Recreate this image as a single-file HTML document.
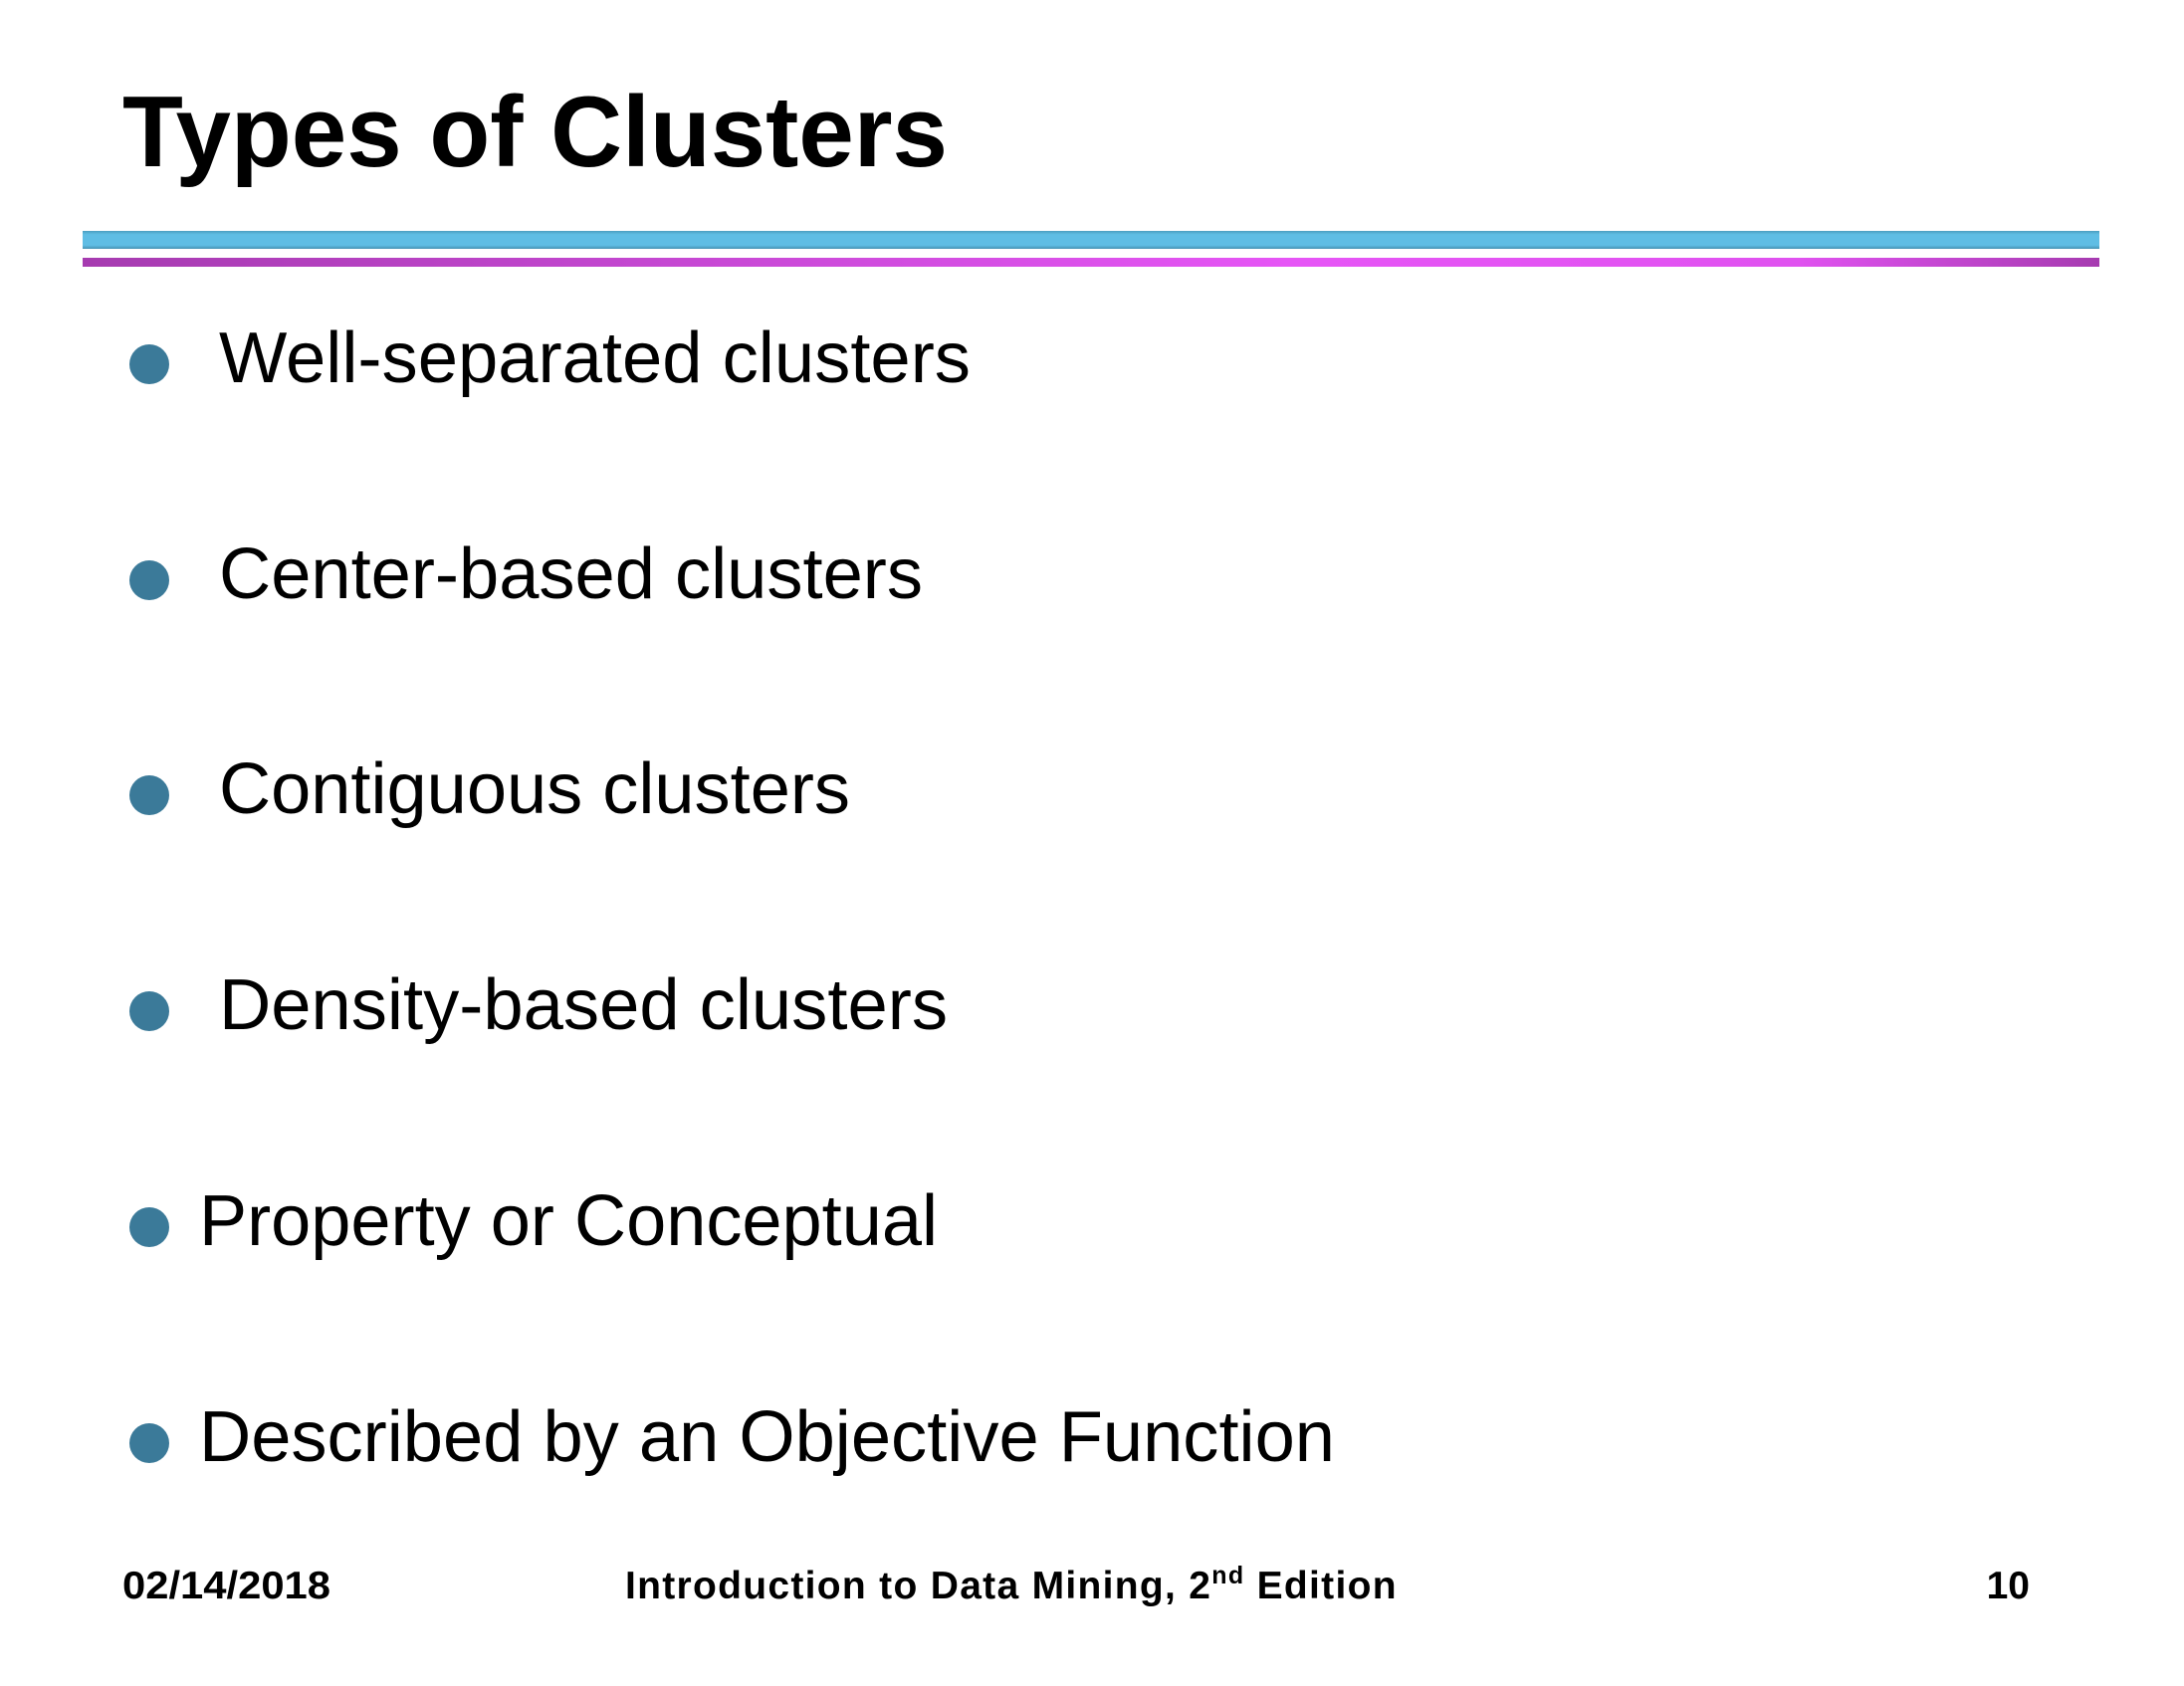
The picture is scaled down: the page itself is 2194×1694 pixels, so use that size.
<!DOCTYPE html>
<html><head><meta charset="utf-8"><style>html,body{margin:0;padding:0;background:#fff}svg{display:block}</style></head>
<body>
<svg width="2194" height="1694" viewBox="0 0 2194 1694" xmlns="http://www.w3.org/2000/svg" font-family="Liberation Sans, Arial, sans-serif">
<defs>
<linearGradient id="b" x1="0" y1="0" x2="0" y2="1"><stop offset="0" stop-color="#4a9ec0"/><stop offset="0.2" stop-color="#5fbde4"/><stop offset="0.8" stop-color="#5fbde4"/><stop offset="1" stop-color="#4592b2"/></linearGradient>
<linearGradient id="p" x1="0" y1="0" x2="1" y2="0"><stop offset="0" stop-color="#a63bb0"/><stop offset="0.6" stop-color="#e655f6"/><stop offset="0.85" stop-color="#e052f0"/><stop offset="1" stop-color="#a63bb0"/></linearGradient>
</defs>
<text x="123" y="167" font-size="101" font-weight="bold" textLength="829" lengthAdjust="spacingAndGlyphs">Types of Clusters</text>
<rect x="83" y="232" width="2026" height="18" fill="url(#b)"/>
<rect x="83" y="259" width="2026" height="9" fill="url(#p)"/>
<g fill="#3b7a99">
<circle cx="150" cy="366" r="20"/><circle cx="150" cy="583" r="20"/><circle cx="150" cy="799" r="20"/><circle cx="150" cy="1016" r="20"/><circle cx="150" cy="1233" r="20"/><circle cx="150" cy="1450" r="20"/>
</g>
<g font-size="72" fill="#000">
<text x="220" y="384" textLength="755" lengthAdjust="spacingAndGlyphs">Well-separated clusters</text>
<text x="220" y="601" textLength="707" lengthAdjust="spacingAndGlyphs">Center-based clusters</text>
<text x="220" y="817" textLength="634" lengthAdjust="spacingAndGlyphs">Contiguous clusters</text>
<text x="220" y="1034" textLength="732" lengthAdjust="spacingAndGlyphs">Density-based clusters</text>
<text x="200" y="1251" textLength="742" lengthAdjust="spacingAndGlyphs">Property or Conceptual</text>
<text x="200" y="1468" textLength="1141" lengthAdjust="spacingAndGlyphs">Described by an Objective Function</text>
</g>
<g font-size="39" font-weight="bold" fill="#000">
<text x="123" y="1606" textLength="209" lengthAdjust="spacingAndGlyphs">02/14/2018</text>
<text x="628" y="1606" letter-spacing="1.3">Introduction to Data Mining, 2<tspan font-size="25" dy="-15">nd</tspan><tspan dy="15"> Edition</tspan></text>
<text x="2039" y="1606" text-anchor="end">10</text>
</g>
</svg>
</body></html>
